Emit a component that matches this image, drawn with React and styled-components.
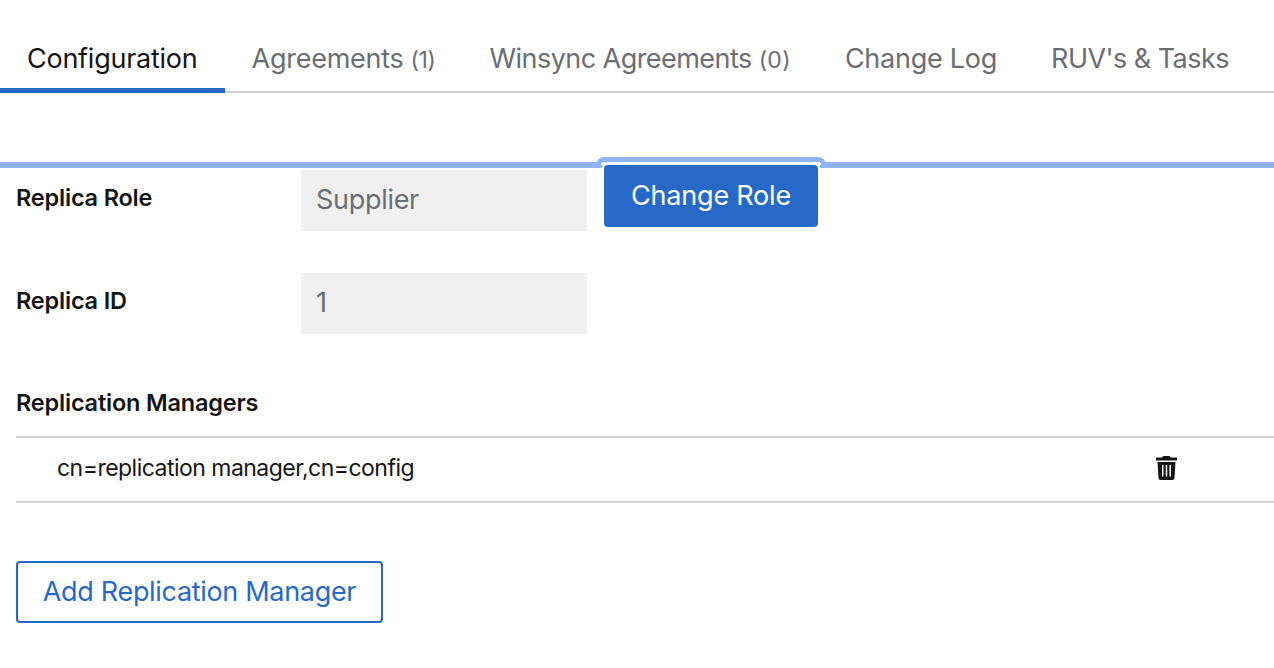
import React from 'react';
import styled, { createGlobalStyle } from 'styled-components';

const GlobalStyle = createGlobalStyle`
  html, body {
    margin: 0;
    padding: 0;
    background: #fff;
    font-family: "Inter", "Liberation Sans", sans-serif;
    color: #151515;
    overflow: hidden;
  }
`;

const Page = styled.div`
  width: 1274px;
  height: 668px;
`;

const TabList = styled.div`
  display: flex;
  height: 93px;
  box-sizing: border-box;
  border-bottom: 2px solid #d2d2d2;
`;

const Tab = styled.div`
  position: relative;
  display: flex;
  align-items: baseline;
  gap: 7px;
  height: 93px;
  box-sizing: border-box;
  padding: 41px 27px 0;
  font-size: 27px;
  line-height: 36px;
  letter-spacing: ${(p) => p.$tracking || '-0.25px'};
  white-space: nowrap;
  color: ${(p) => (p.$active ? '#151515' : '#6a6e73')};

  ${(p) =>
    p.$active &&
    `
    &::after {
      content: "";
      position: absolute;
      left: 0;
      right: 0;
      bottom: 0;
      height: 5px;
      background: #2769c7;
    }
  `}
`;

const Count = styled.span`
  font-size: 23px;
  letter-spacing: ${(p) => (p.$wide ? '0.3px' : '-0.4px')};
`;

const Section = styled.div`
  margin-top: 69px;
  border-top: 6px solid #8fb3f3;
  padding-left: 16px;
`;

const Row = styled.div`
  display: flex;
  align-items: flex-start;
  padding-top: 2px;
  height: 103px;
  box-sizing: border-box;
`;

const Label = styled.div`
  width: 285px;
  height: 61px;
  padding-top: 12px;
  box-sizing: border-box;
  font-size: 23.5px;
  line-height: 32px;
  font-weight: 600;
  letter-spacing: -0.2px;
`;

const ReadOnlyInput = styled.input`
  width: 286px;
  height: 61px;
  box-sizing: border-box;
  border: none;
  background: #f0f0f0;
  padding: 0 15px 2px;
  font: inherit;
  font-size: 27px;
  letter-spacing: -0.3px;
  color: #6a6e73;
  outline: none;
`;

const PrimaryButton = styled.button`
  position: relative;
  width: 214px;
  height: 62px;
  margin: -5px 0 0 17px;
  padding: 0 0 2px;
  border: none;
  border-radius: 4px;
  background: #2769c7;
  box-shadow: 0 -3px 0 2px #fff;
  color: #fff;
  font: inherit;
  font-size: 27px;
  letter-spacing: -0.2px;

  /* focus ring poking above the rule */
  &::before {
    content: "";
    position: absolute;
    left: -8px;
    right: -8px;
    top: -8px;
    height: 8px;
    box-sizing: border-box;
    border: 5px solid #8fb3f3;
    border-bottom: none;
    border-radius: 8px 8px 0 0;
    background: #fff;
  }
`;

const ManagersTitle = styled.div`
  font-size: 23.5px;
  line-height: 32px;
  font-weight: 600;
  letter-spacing: -0.2px;
  margin-top: 13px;
  height: 49px;
`;

const Table = styled.div`
  border-top: 2px solid #d2d2d2;
  border-bottom: 2px solid #d2d2d2;
  height: 67px;
  box-sizing: border-box;
  display: flex;
  align-items: center;
  justify-content: space-between;
  padding: 0 97px 3px 41px;
  font-size: 23px;
  letter-spacing: -0.52px;
`;

const DeleteIcon = styled.svg`
  width: 21px;
  height: 24px;
  fill: #151515;
  display: block;
`;

const SecondaryButton = styled.button`
  display: block;
  margin-top: 58px;
  width: 367px;
  height: 62px;
  padding: 0 0 2px;
  box-sizing: border-box;
  background: #fff;
  border: 2px solid #2769c7;
  border-radius: 4px;
  color: #2769c7;
  font: inherit;
  font-size: 27px;
  letter-spacing: -0.32px;
`;

const TrashIcon = () => (
  <DeleteIcon viewBox="0 0 448 512">
    <path d="M432 32H312l-9.4-18.7A24 24 0 0 0 281.1 0H166.8a23.72 23.72 0 0 0-21.4 13.3L136 32H16A16 16 0 0 0 0 48v32a16 16 0 0 0 16 16h416a16 16 0 0 0 16-16V48a16 16 0 0 0-16-16zM53.2 467a48 48 0 0 0 47.9 45h245.8a48 48 0 0 0 47.9-45L416 128H32zM160 200v224a16 16 0 0 1-32 0V200a16 16 0 0 1 32 0zm80 0v224a16 16 0 0 1-32 0V200a16 16 0 0 1 32 0zm80 0v224a16 16 0 0 1-32 0V200a16 16 0 0 1 32 0z" />
  </DeleteIcon>
);

const App = () => (
  <Page>
    <GlobalStyle />
    <TabList>
      <Tab $active>Configuration</Tab>
      <Tab>
        Agreements <Count>(1)</Count>
      </Tab>
      <Tab $tracking="-0.55px">
        Winsync Agreements <Count $wide>(0)</Count>
      </Tab>
      <Tab>Change Log</Tab>
      <Tab $tracking="-0.55px">RUV's &amp; Tasks</Tab>
    </TabList>
    <Section>
      <Row>
        <Label>Replica Role</Label>
        <ReadOnlyInput readOnly value="Supplier" />
        <PrimaryButton>Change Role</PrimaryButton>
      </Row>
      <Row>
        <Label>Replica ID</Label>
        <ReadOnlyInput readOnly value="1" />
      </Row>
      <ManagersTitle>Replication Managers</ManagersTitle>
      <Table>
        <span>cn=replication manager,cn=config</span>
        <TrashIcon />
      </Table>
      <SecondaryButton>Add Replication Manager</SecondaryButton>
    </Section>
  </Page>
);

export default App;
